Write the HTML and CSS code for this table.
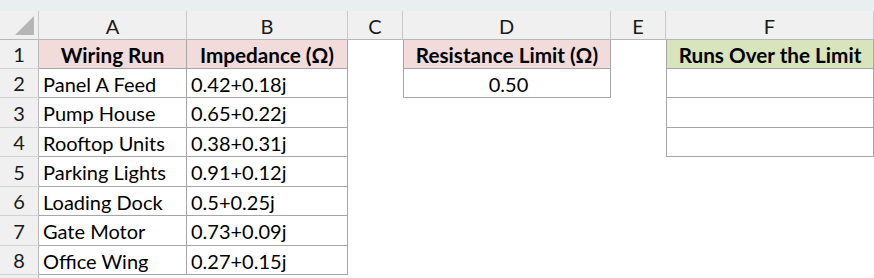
FILE: index.html
```html
<!DOCTYPE html>
<html>
<head>
<meta charset="utf-8">
<link rel="stylesheet" href="styles.css">
</head>
<body>
<div class="strip"></div>
<div class="sheet">
  <div class="corner"><div class="tri"></div></div>
  <div class="colh">A</div>
  <div class="colh">B</div>
  <div class="colh">C</div>
  <div class="colh">D</div>
  <div class="colh">E</div>
  <div class="colh last">F</div>

  <div class="rowh">1</div>
  <div class="c b hdr pink">Wiring Run</div>
  <div class="c b hdr pink">Impedance (Ω)</div>
  <div class="c"></div>
  <div class="c b bl hdr pink">Resistance Limit (Ω)</div>
  <div class="c"></div>
  <div class="c b bl hdr green">Runs Over the Limit</div>

  <div class="rowh">2</div>
  <div class="c b">Panel A Feed</div>
  <div class="c b">0.42+0.18j</div>
  <div class="c"></div>
  <div class="c b bl ctr">0.50</div>
  <div class="c"></div>
  <div class="c b bl"></div>

  <div class="rowh">3</div>
  <div class="c b">Pump House</div>
  <div class="c b">0.65+0.22j</div>
  <div class="c"></div>
  <div class="c"></div>
  <div class="c"></div>
  <div class="c b bl"></div>

  <div class="rowh">4</div>
  <div class="c b">Rooftop Units</div>
  <div class="c b">0.38+0.31j</div>
  <div class="c"></div>
  <div class="c"></div>
  <div class="c"></div>
  <div class="c b bl"></div>

  <div class="rowh">5</div>
  <div class="c b">Parking Lights</div>
  <div class="c b">0.91+0.12j</div>
  <div class="c"></div>
  <div class="c"></div>
  <div class="c"></div>
  <div class="c"></div>

  <div class="rowh">6</div>
  <div class="c b">Loading Dock</div>
  <div class="c b">0.5+0.25j</div>
  <div class="c"></div>
  <div class="c"></div>
  <div class="c"></div>
  <div class="c"></div>

  <div class="rowh">7</div>
  <div class="c b">Gate Motor</div>
  <div class="c b">0.73+0.09j</div>
  <div class="c"></div>
  <div class="c"></div>
  <div class="c"></div>
  <div class="c"></div>

  <div class="rowh">8</div>
  <div class="c b">Office Wing</div>
  <div class="c b">0.27+0.15j</div>
  <div class="c"></div>
  <div class="c"></div>
  <div class="c"></div>
  <div class="c"></div>

  <div class="rowh"></div>
  <div class="c"></div>
  <div class="c"></div>
  <div class="c"></div>
  <div class="c"></div>
  <div class="c"></div>
  <div class="c"></div>
</div>
</body>
</html>
```

FILE: styles.css
```css
html, body {
  margin: 0;
  padding: 0;
  background: #ffffff;
  width: 874px;
  height: 278px;
  overflow: hidden;
}

body {
  font-family: Lato, "Open Sans", sans-serif;
  font-size: 20px;
  color: #000000;
}

.strip {
  height: 11px;
  background: #e9eef1;
}

.sheet {
  display: grid;
  grid-template-columns: 39px 148px 161px 55px 208px 55px 208px;
  grid-template-rows: 29px 29px 29px 30px 29px 30px 29px 30px 29px 10px;
}

.sheet > div {
  box-sizing: border-box;
  overflow: hidden;
  white-space: nowrap;
}

.corner {
  background: #f0f0f0;
  border-right: 1px solid #c8c8c8;
  border-bottom: 1px solid #b8b8b8;
  position: relative;
}

.tri {
  position: absolute;
  right: 4px;
  bottom: 4px;
  width: 0;
  height: 0;
  border-left: 19px solid transparent;
  border-bottom: 19px solid #b5b5b5;
}

.colh {
  background: #f0f0f0;
  border-right: 1px solid #c8c8c8;
  border-bottom: 1px solid #b8b8b8;
  display: flex;
  align-items: center;
  justify-content: center;
  color: #1a1a1a;
  padding-top: 1px;
}

.rowh {
  background: #f0f0f0;
  border-right: 1px solid #b8b8b8;
  border-bottom: 1px solid #d2d2d2;
  display: flex;
  align-items: center;
  justify-content: center;
  color: #1a1a1a;
}

.c {
  display: flex;
  align-items: center;
  padding-left: 4px;
  padding-top: 1px;
}

.c.b {
  border-right: 1px solid #a6a6a6;
  border-bottom: 1px solid #a6a6a6;
}

.c.bl {
  border-left: 1px solid #a6a6a6;
  padding-left: 3px;
}

.hdr {
  font-weight: 700;
  font-size: 20.7px;
  justify-content: center;
  padding-left: 0;
}

.c.bl.hdr {
  padding-left: 0;
}

.ctr {
  justify-content: center;
}

.pink {
  background: #f2dcdb;
}

.green {
  background: #d8e4bc;
}
```
